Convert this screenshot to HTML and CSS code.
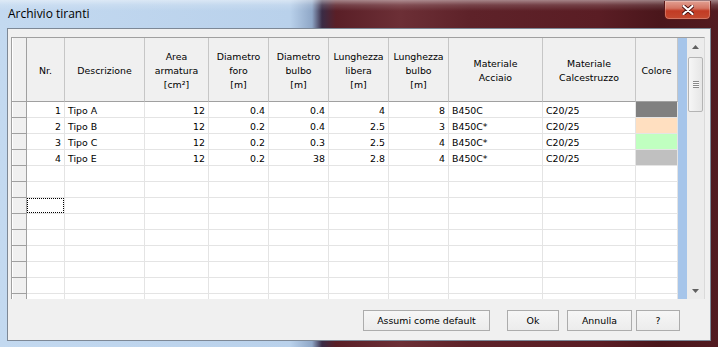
FILE: index.html
```html
<!DOCTYPE html>
<html lang="it">
<head>
    <meta charset="UTF-8">
    <title>Archivio tiranti</title>
    <link rel="stylesheet" href="styles.css">
</head>
<body>
<div class="window">
    <!--barra del titolo-->
    <div class="titlebar">
        <span class="title">Archivio tiranti</span>
        <a href="#" class="close">
            <svg width="12" height="10" viewBox="0 0 12 10">
                <path d="M1.5 1 L10.5 9 M10.5 1 L1.5 9" stroke="#4a1010" stroke-width="4" stroke-linecap="round"/>
                <path d="M1.5 1 L10.5 9 M10.5 1 L1.5 9" stroke="#fff" stroke-width="2.2" stroke-linecap="round"/>
            </svg>
        </a>
    </div>
    <!--area client-->
    <div class="client">
        <div class="grid">
            <div class="sheet">
                <div class="row head">
                    <div class="rh"></div>
                    <div>Nr.</div>
                    <div>Descrizione</div>
                    <div>Area<br>armatura<br>[cm²]</div>
                    <div>Diametro<br>foro<br>[m]</div>
                    <div>Diametro<br>bulbo<br>[m]</div>
                    <div>Lunghezza<br>libera<br>[m]</div>
                    <div>Lunghezza<br>bulbo<br>[m]</div>
                    <div>Materiale<br>Acciaio</div>
                    <div>Materiale<br>Calcestruzzo</div>
                    <div>Colore</div>
                </div>
                <div class="row">
                    <div class="rh"></div><div class="n">1</div><div>Tipo A</div><div class="n">12</div><div class="n">0.4</div><div class="n">0.4</div><div class="n">4</div><div class="n">8</div><div>B450C</div><div>C20/25</div><div class="col-grey"></div>
                </div>
                <div class="row">
                    <div class="rh"></div><div class="n">2</div><div>Tipo B</div><div class="n">12</div><div class="n">0.2</div><div class="n">0.4</div><div class="n">2.5</div><div class="n">3</div><div>B450C*</div><div>C20/25</div><div class="col-peach"></div>
                </div>
                <div class="row">
                    <div class="rh"></div><div class="n">3</div><div>Tipo C</div><div class="n">12</div><div class="n">0.2</div><div class="n">0.3</div><div class="n">2.5</div><div class="n">4</div><div>B450C*</div><div>C20/25</div><div class="col-green"></div>
                </div>
                <div class="row">
                    <div class="rh"></div><div class="n">4</div><div>Tipo E</div><div class="n">12</div><div class="n">0.2</div><div class="n">38</div><div class="n">2.8</div><div class="n">4</div><div>B450C*</div><div>C20/25</div><div class="col-silver"></div>
                </div>
                <!--righe vuote-->
                <div class="row"><div class="rh"></div><div></div><div></div><div></div><div></div><div></div><div></div><div></div><div></div><div></div><div></div></div>
                <div class="row"><div class="rh"></div><div></div><div></div><div></div><div></div><div></div><div></div><div></div><div></div><div></div><div></div></div>
                <div class="row"><div class="rh"></div><div class="focus"></div><div></div><div></div><div></div><div></div><div></div><div></div><div></div><div></div><div></div></div>
                <div class="row"><div class="rh"></div><div></div><div></div><div></div><div></div><div></div><div></div><div></div><div></div><div></div><div></div></div>
                <div class="row"><div class="rh"></div><div></div><div></div><div></div><div></div><div></div><div></div><div></div><div></div><div></div><div></div></div>
                <div class="row"><div class="rh"></div><div></div><div></div><div></div><div></div><div></div><div></div><div></div><div></div><div></div><div></div></div>
                <div class="row"><div class="rh"></div><div></div><div></div><div></div><div></div><div></div><div></div><div></div><div></div><div></div><div></div></div>
                <div class="row"><div class="rh"></div><div></div><div></div><div></div><div></div><div></div><div></div><div></div><div></div><div></div><div></div></div>
                <div class="row"><div class="rh"></div><div></div><div></div><div></div><div></div><div></div><div></div><div></div><div></div><div></div><div></div></div>
            </div>
            <div class="selbar"></div>
            <!--barra di scorrimento-->
            <div class="scroll">
                <div class="arrow">
                    <svg width="7" height="4" viewBox="0 0 7 4"><polygon points="0,4 3.5,0 7,4" fill="#606060"/></svg>
                </div>
                <div class="thumb"><span class="grip"></span></div>
                <div class="arrow arrow-down">
                    <svg width="7" height="4" viewBox="0 0 7 4"><polygon points="0,0 3.5,4 7,0" fill="#606060"/></svg>
                </div>
            </div>
        </div>
        <div class="buttons">
            <button class="btn btn-default">Assumi come default</button>
            <button class="btn btn-ok">Ok</button>
            <button class="btn btn-cancel">Annulla</button>
            <button class="btn btn-help">?</button>
        </div>
    </div>
</div>
</body>
</html>
```

FILE: styles.css
```css
*{
    box-sizing: border-box;
}
body{
    margin: 0;
    width: 718px;
    height: 347px;
    overflow: hidden;
    font-family: "DejaVu Sans", sans-serif;
    font-size: 9.4px;
    color: #000;
    background:
        linear-gradient(to bottom, rgba(255,255,255,.45) 0, rgba(255,255,255,.15) 5px, rgba(255,255,255,0) 11px) top left / 100% 28px no-repeat,
        linear-gradient(to right, #c3d9f0 0, #b9d1eb 290px, #8fa7c7 312px, #3a2c46 322px, #5a1f27 336px, #6c2f36 400px, #5e2229 470px, #5a1d24 600px, #4a161b 660px, #521a20 718px);
}
.window{
    display: flex;
    flex-direction: column;
    height: 347px;
}
.titlebar{
    flex: none;
    display: flex;
    height: 28px;
}
.title{
    padding-left: 8px;
    font-family: "Open Sans", sans-serif;
    font-size: 12px;
    line-height: 28px;
}
.close{
    display: flex;
    align-items: center;
    justify-content: center;
    margin: 1px 7px 0 auto;
    width: 47px;
    height: 19px;
    border: 1px solid #5a1818;
    border-top: none;
    border-radius: 0 0 5px 5px;
    background: linear-gradient(#e2a092 0, #d47563 40%, #c23b24 55%, #c44a30 100%);
    box-shadow: inset 0 0 0 1px rgba(255,255,255,.25);
}
/*area client*/
.client{
    flex: 1;
    display: flex;
    flex-direction: column;
    margin: 0 7px 6px;
    padding: 8px 5px 9px 3px;
    border: 1px solid #7d8896;
    background: #f0f0f0;
}
.grid{
    display: flex;
    height: 262px;
    border-top: 1px solid #a0a0a0;
    border-left: 1px solid #a0a0a0;
    border-right: 1px solid #dadada;
    background: #fff;
}
.sheet{
    width: 666px;
    overflow: hidden;
}
.row{
    display: grid;
    grid-template-columns: 15px 38px 80px 64px 60px 60px 60px 60px 94px 93px 42px;
    height: 16px;
    line-height: 17px;
}
.row > div{
    padding: 0 3px;
    border-right: 1px solid #e4e4e4;
    border-bottom: 1px solid #e4e4e4;
    white-space: nowrap;
    overflow: hidden;
}
.row .n{
    text-align: right;
}
.row .rh{
    background: #f0f0f0;
    border-right-color: #a0a0a0;
    border-bottom-color: #a0a0a0;
    box-shadow: inset 1px 0 #fff;
}
.head{
    height: 64px;
    line-height: 14px;
}
.head > div{
    display: flex;
    align-items: center;
    justify-content: center;
    padding-top: 2px;
    text-align: center;
    background: #f0f0f0;
    border-right-color: #c6c6c6;
    border-bottom-color: #a0a0a0;
}
.row .col-grey{ background: #808080; }
.row .col-peach{ background: #ffdfc0; }
.row .col-green{ background: #c0ffc0; }
.row .col-silver{ background: #c0c0c0; }
.row .focus{
    position: relative;
}
.focus::after{
    content: "";
    position: absolute;
    top: 0;
    left: 0;
    right: 0;
    bottom: 0;
    border: 1px dotted #000;
}
.selbar{
    width: 9px;
    background: #a6c5ea;
}
/*barra di scorrimento*/
.scroll{
    display: flex;
    flex-direction: column;
    align-items: center;
    width: 17px;
    background: #ececec;
}
.arrow{
    display: flex;
    align-items: center;
    justify-content: center;
    width: 17px;
    height: 17px;
}
.arrow-down{
    margin-top: auto;
}
.thumb{
    display: flex;
    align-items: center;
    justify-content: center;
    margin-top: 2px;
    width: 15px;
    height: 55px;
    border: 1px solid #b4b4b4;
    border-radius: 2px;
    background: linear-gradient(to right, #f6f6f6, #e6e6e6);
}
.grip{
    width: 6px;
    height: 7px;
    background: repeating-linear-gradient(to bottom, #8a8a8a 0, #8a8a8a 1px, #fafafa 1px, #fafafa 2px);
}
/*pulsanti*/
.buttons{
    display: flex;
    justify-content: flex-end;
    margin-top: 11px;
    padding-right: 25px;
}
.btn{
    height: 21px;
    padding: 0;
    border: 1px solid #acacac;
    background: linear-gradient(#f6f6f6, #ececec);
    font: inherit;
    color: #000;
}
.btn-default{ width: 127px; }
.btn-ok{ width: 52px; margin-left: 17px; }
.btn-cancel{ width: 65px; margin-left: 8px; }
.btn-help{ width: 44px; margin-left: 4px; }
```
